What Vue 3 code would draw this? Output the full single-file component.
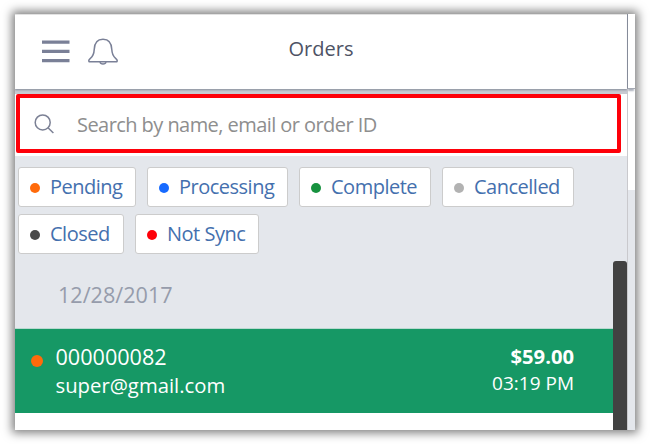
<script setup>
const filters = [
  { label: 'Pending', tone: 'orange', width: 118 },
  { label: 'Processing', tone: 'blue', width: 141 },
  { label: 'Complete', tone: 'green', width: 132 },
  { label: 'Cancelled', tone: 'grey', width: 132 },
  { label: 'Closed', tone: 'dark', width: 106 },
  { label: 'Not Sync', tone: 'red', width: 124 },
]
</script>

<template>
  <div class="page">
    <div class="window">
      <section class="panel">
        <header class="header">
          <div class="actions">
            <svg class="menu" viewBox="0 0 28 24" width="28" height="24">
              <path d="M0 2.2H27.5M0 11.4H27.5M0 20.6H27.5" />
            </svg>
            <svg class="bell" viewBox="0 0 30 28" width="30" height="28">
              <path d="M1.2 23.8C0.2 22.5 1 21.4 2.4 20.3C4.8 18.4 6 16 6.2 11.6C6.4 5 9 1.2 15 1.2S23.6 5 23.8 11.6C24 16 25.2 18.4 27.6 20.3C29 21.4 29.8 22.5 28.8 23.8Z" />
              <path d="M12 24.1C12.5 26.6 17.5 26.6 18 24.1" />
            </svg>
          </div>
          <h1 class="title">Orders</h1>
        </header>
        <div class="search-wrap">
          <div class="search">
            <svg class="magnifier" viewBox="0 0 20 20" width="20" height="20">
              <circle cx="8.7" cy="8.4" r="7.5" />
              <path d="M14 13.7L19.4 19" />
            </svg>
            <span class="placeholder">Search by name, email or order ID</span>
          </div>
        </div>
        <div class="filters">
          <div v-for="f in filters" :key="f.label" class="chip" :style="{ width: f.width + 'px' }">
            <i class="dot" :class="f.tone"></i>
            <span class="label">{{ f.label }}</span>
          </div>
        </div>
        <div class="date">12/28/2017</div>
        <article class="order">
          <i class="status"></i>
          <div class="customer">
            <div class="number">000000082</div>
            <div class="email">super@gmail.com</div>
          </div>
          <div class="amount">
            <div class="price">$59.00</div>
            <div class="time">03:19 PM</div>
          </div>
        </article>
        <div class="scrollbar"></div>
      </section>
      <aside class="side">
        <div class="side-head"></div>
        <div class="side-block"></div>
      </aside>
    </div>
  </div>
</template>

<style>
body { background: #fff; overflow: hidden; }
</style>

<style scoped>
* { box-sizing: border-box; }
.page {
  width: 650px;
  height: 444px;
  padding: 14px 15px;
  overflow: hidden;
  font-family: "Open Sans", "Noto Sans", sans-serif;
}
.window {
  display: flex;
  width: 620px;
  height: 416px;
  background: #fff;
  box-shadow: 0 0 9px 3px rgba(0, 0, 0, 0.5);
}
.panel {
  position: relative;
  width: 612px;
  height: 416px;
  overflow: hidden;
  background: #fff;
}
.header {
  position: relative;
  z-index: 1;
  display: grid;
  grid-template-columns: 1fr auto 1fr;
  align-items: start;
  height: 75px;
  background: #fff;
  border-top: 1px solid #e2e2e2;
  box-shadow: 0 1px 2px #858b99, 0 5px 0 #c8cbd2;
}
.actions { display: flex; gap: 18px; padding: 23px 0 0 27px; }
svg { display: block; fill: none; }
.menu { margin-top: 2px; stroke: #7a8097; stroke-width: 3.2; }
.bell { stroke: #7a8097; stroke-width: 1.5; stroke-linejoin: round; }
.title {
  margin: 0;
  padding-top: 20px;
  font-size: 20px;
  font-weight: 400;
  line-height: 28px;
  letter-spacing: 0.05px;
  color: #4e5365;
}
.search-wrap { height: 67px; padding: 5px 6px 3px 1px; background: #fff; }
.search {
  position: relative;
  z-index: 2;
  display: flex;
  align-items: center;
  height: 59px;
  padding-left: 14px;
  background: #fff;
  border: 4px solid #fe0009;
  border-radius: 2px;
}
.magnifier { stroke: #7c8195; stroke-width: 1.5; }
.placeholder {
  margin: 2px 0 0 23px;
  font-size: 20px;
  line-height: 28px;
  letter-spacing: -0.56px;
  color: #8e8e8e;
}
.filters {
  display: flex;
  flex-wrap: wrap;
  align-content: flex-start;
  gap: 7px 11px;
  height: 105px;
  padding: 11px 40px 0 3px;
  background: #e4e7ec;
}
.chip {
  display: flex;
  align-items: center;
  gap: 10px;
  height: 40px;
  padding-left: 11px;
  background: #fff;
  border: 1px solid #ccc;
  border-radius: 3px;
  font-size: 20px;
  line-height: 28px;
  letter-spacing: -0.5px;
  color: #4470ae;
}
.label { white-space: nowrap; }
.dot { flex: none; width: 10px; height: 10px; margin-top: 1px; border-radius: 50%; }
.orange { background: #ff6a0b; }
.blue { background: #176aff; }
.green { background: #17923f; }
.grey { background: #b2b2b2; }
.dark { background: #4a4a4a; }
.red { background: #fe0009; }
.date {
  height: 68px;
  padding: 19px 0 0 43px;
  background: #e4e7ec;
  border-bottom: 1px solid #b9d9d0;
  font-size: 21.6px;
  line-height: 30px;
  color: #969cab;
}
.order {
  display: flex;
  height: 84px;
  padding-left: 16px;
  background: #169865;
  color: #fff;
}
.status {
  width: 12px;
  height: 12px;
  margin-top: 26px;
  border-radius: 50%;
  background: #ff6a0b;
}
.customer { margin-left: 12.5px; padding-top: 13px; }
.number { font-size: 21.6px; line-height: 29px; }
.email { font-size: 20.3px; line-height: 28px; }
.amount { margin-left: auto; padding: 13px 53px 0 0; text-align: right; }
.price { font-size: 20.2px; font-weight: 700; line-height: 28px; }
.time { font-size: 19px; line-height: 27px; }
.scrollbar {
  position: absolute;
  top: 247px;
  right: 0;
  width: 14px;
  height: 180px;
  border-radius: 3px;
  background: #424242;
}
.side { width: 8px; background: #e4e7ec; border-left: 1px solid #c9c9cd; }
.side-head {
  position: relative;
  z-index: 3;
  height: 75px;
  margin-left: -1px;
  background: #fff;
  border-left: 1px solid #858b99;
  border-bottom: 1px solid #a5a9b3;
  box-shadow: 0 3px 2px -1px #abb0bb;
}
.side-block { height: 101px; background: #fff; }
</style>
